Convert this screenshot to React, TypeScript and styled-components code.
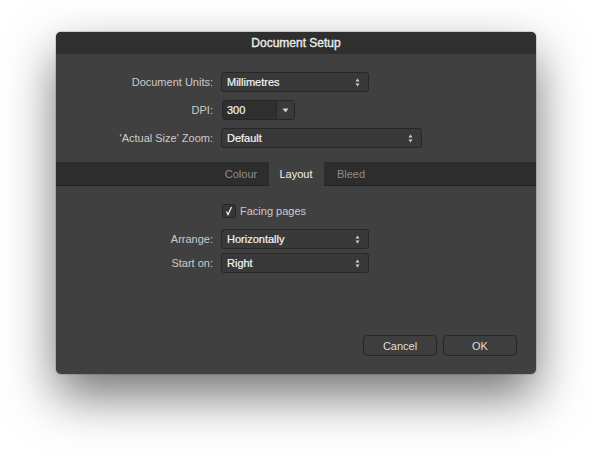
import React from 'react';
import styled, { createGlobalStyle } from 'styled-components';

const GlobalStyle = createGlobalStyle`
  html, body {
    margin: 0;
    background: #ffffff;
    font-family: "Liberation Sans", Arial, sans-serif;
  }
`;

const Stage = styled.div`
  width: 592px;
  height: 455px;
  padding: 32px 0 0 56px;
  box-sizing: border-box;
`;

const Dialog = styled.div`
  width: 480px;
  height: 342px;
  background: #404040;
  border-radius: 5px;
  box-shadow: 0 0 0 1px rgba(0, 0, 0, 0.12), 0 22px 50px rgba(0, 0, 0, 0.55);
  display: flex;
  flex-direction: column;
  overflow: hidden;
`;

const TitleBar = styled.div`
  height: 22px;
  background: #2f2f2f;
  color: #ececec;
  font-size: 12px;
  -webkit-text-stroke: 0.35px #ececec;
  display: flex;
  align-items: center;
  justify-content: center;
`;

const Form = styled.div<{ $top: number }>`
  display: grid;
  grid-template-columns: 157px auto;
  column-gap: 8px;
  row-gap: 8px;
  align-items: center;
  padding-top: ${(p) => p.$top}px;
`;

const Label = styled.div`
  justify-self: end;
  color: #cbcbcb;
  font-size: 11px;
`;

const Select = styled.div<{ $width: number }>`
  width: ${(p) => p.$width}px;
  height: 20px;
  box-sizing: border-box;
  background: #393939;
  border: 1px solid #272727;
  border-radius: 3px;
  display: flex;
  align-items: center;
  justify-content: space-between;
  padding: 0 8px 0 5px;
  color: #f4f4f4;
  font-size: 11px;
  -webkit-text-stroke: 0.2px #f4f4f4;
`;

const Combo = styled.div`
  width: 73px;
  height: 20px;
  margin-left: 1px;
  box-sizing: border-box;
  border: 1px solid #272727;
  border-radius: 3px;
  display: flex;
  overflow: hidden;
`;

const ComboInput = styled.div`
  flex: 1;
  background: #2f2f2f;
  color: #f4f4f4;
  font-size: 11px;
  -webkit-text-stroke: 0.2px #f4f4f4;
  display: flex;
  align-items: center;
  padding-left: 4px;
  border-right: 1px solid #272727;
`;

const ComboButton = styled.div`
  width: 17px;
  background: #3a3a3a;
  display: flex;
  align-items: center;
  justify-content: center;
`;

const TabBar = styled.div`
  margin-top: 14px;
  height: 24px;
  background: #2d2d2d;
  border-bottom: 1px solid #232323;
  box-sizing: border-box;
  display: flex;
  justify-content: center;
`;

const Tab = styled.div<{ $active?: boolean }>`
  width: 55px;
  display: flex;
  align-items: center;
  justify-content: center;
  font-size: 11px;
  color: ${(p) => (p.$active ? '#f0f0f0' : '#8e8e8e')};
  background: ${(p) => (p.$active ? '#404040' : 'transparent')};
  margin-bottom: ${(p) => (p.$active ? '-1px' : '0')};
`;

const CheckRow = styled.label`
  display: flex;
  align-items: center;
  gap: 4px;
  color: #cbcbcb;
  font-size: 11px;
  margin-bottom: 3px;
`;

const CheckBox = styled.span`
  width: 14px;
  height: 14px;
  box-sizing: border-box;
  background: #363636;
  border: 1px solid #262626;
  border-radius: 3px;
  display: flex;
  align-items: center;
  justify-content: center;
  margin-left: 1px;
`;

const Footer = styled.div`
  margin-top: auto;
  display: flex;
  justify-content: flex-end;
  gap: 6px;
  padding: 0 19px 18px 0;
`;

const Button = styled.button`
  width: 74px;
  height: 21px;
  background: #3e3e3e;
  border: 1px solid #272727;
  border-radius: 4px;
  color: #dedede;
  font-family: inherit;
  font-size: 11px;
  padding: 0;
`;

const Spacer = styled.div``;

const Stepper = () => (
  <svg width="5" height="9" viewBox="0 0 5 9">
    <path d="M2.5 0.5 L4.5 3.5 L0.5 3.5 Z" fill="#d0d0d0" />
    <path d="M0.5 5.5 L4.5 5.5 L2.5 8.5 Z" fill="#d0d0d0" />
  </svg>
);

const SelectBox = ({ value, width }: { value: string; width: number }) => (
  <Select $width={width}>
    <span>{value}</span>
    <Stepper />
  </Select>
);

export default function App() {
  return (
    <>
      <GlobalStyle />
      <Stage>
        <Dialog>
          <TitleBar>Document Setup</TitleBar>
          <Form $top={18}>
            <Label>Document Units:</Label>
            <SelectBox value="Millimetres" width={148} />
            <Label>DPI:</Label>
            <Combo>
              <ComboInput>300</ComboInput>
              <ComboButton>
                <svg width="7" height="5" viewBox="0 0 7 5">
                  <path d="M0.5 0.5 L6.5 0.5 L3.5 4.5 Z" fill="#d0d0d0" />
                </svg>
              </ComboButton>
            </Combo>
            <Label>'Actual Size' Zoom:</Label>
            <SelectBox value="Default" width={201} />
          </Form>
          <TabBar>
            <Tab>Colour</Tab>
            <Tab $active>Layout</Tab>
            <Tab>Bleed</Tab>
          </TabBar>
          <Form $top={18}>
            <Spacer />
            <CheckRow>
              <CheckBox>
                <svg width="10" height="10" viewBox="0 0 10 10">
                  <path d="M2.5 5.5 L4 8.5 L7.5 1" stroke="#f4f4f4" strokeWidth="1.2" fill="none" />
                </svg>
              </CheckBox>
              Facing pages
            </CheckRow>
            <Label>Arrange:</Label>
            <SelectBox value="Horizontally" width={148} />
          </Form>
          <Form $top={4}>
            <Label>Start on:</Label>
            <SelectBox value="Right" width={148} />
          </Form>
          <Footer>
            <Button>Cancel</Button>
            <Button>OK</Button>
          </Footer>
        </Dialog>
      </Stage>
    </>
  );
}
